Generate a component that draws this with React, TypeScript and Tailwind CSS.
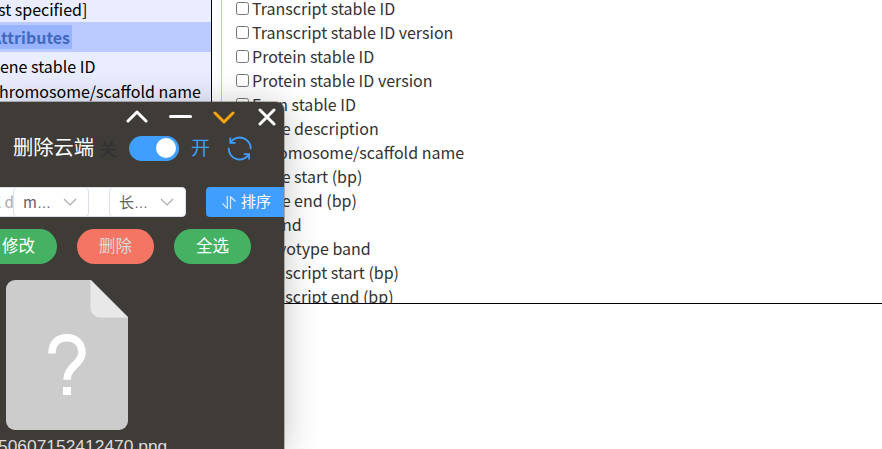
import React from "react";

const attributes = [
  "Transcript stable ID",
  "Transcript stable ID version",
  "Protein stable ID",
  "Protein stable ID version",
  "Exon stable ID",
  "Gene description",
  "Chromosome/scaffold name",
  "Gene start (bp)",
  "Gene end (bp)",
  "Strand",
  "Karyotype band",
  "Transcript start (bp)",
  "Transcript end (bp)",
];

function Sidebar() {
  return (
    <aside className="flex h-full w-[212px] shrink-0 flex-col overflow-hidden whitespace-nowrap border-r border-black bg-[#eaedff] text-[16px] leading-6 text-black">
      <div className="flex h-[22px] items-end pb-px">
        <span className="-ml-[2px] leading-6">st specified]</span>
      </div>
      <div className="flex h-[30px] items-center bg-[#bacbff]">
        <span className="-ml-[9px] bg-[#9ab3ff] pr-0.5 font-bold leading-6 text-[#4169bd]">Attributes</span>
      </div>
      <div className="mt-[2px]">ene stable ID</div>
      <div className="mt-px -ml-[1px]">hromosome/scaffold name</div>
    </aside>
  );
}

function AttributeList() {
  return (
    <section className="ml-[9px] flex-1 overflow-hidden border-l border-[#b9c8fa] pl-3.5">
      <ul className="-mt-1">
        {attributes.map((name) => (
          <li key={name} className="flex h-6 items-center whitespace-nowrap text-[16px] leading-6 text-[#333]">
            <span className="mr-[3px] size-[13px] shrink-0 rounded-[2.5px] border border-[#767676] bg-white" />
            {name}
          </li>
        ))}
      </ul>
    </section>
  );
}

function Chevron({ className }: { className: string }) {
  return (
    <svg className={className} viewBox="0 0 22 13" fill="none" stroke="currentColor" strokeWidth="3" strokeLinecap="round" strokeLinejoin="round">
      <path d="M2 11 11 2l9 9" />
    </svg>
  );
}

function Select({ label, wide = false }: { label: string; wide?: boolean }) {
  return (
    <div className={`flex h-[30px] shrink-0 items-center justify-between rounded border border-[#dcdfe6] bg-white pr-[11px] pl-[9px] text-[15px] text-[#606266] ${wide ? "w-[77px]" : "w-[76px]"}`}>
      <span>
        {label}
        <span className="font-['Liberation_Sans',sans-serif] text-[14px]">…</span>
      </span>
      <svg className="h-[9px] w-[14px] text-[#a8abb2]" viewBox="0 0 14 9" fill="none" stroke="currentColor" strokeWidth="1.2">
        <path d="m1 1 6 6 6-6" />
      </svg>
    </div>
  );
}

function FileWindow() {
  return (
    <div className="absolute top-[102px] left-0 h-[347px] w-[284px] overflow-hidden rounded-tr-lg bg-[#3f3b36] shadow-[0_0_0_1px_rgba(90,90,90,.4),0_4px_36px_rgba(0,0,0,.24)]">
      <div className="flex h-[29px] items-center pl-[126px] text-white">
        <Chevron className="-mt-px h-[13px] w-[22px]" />
        <span className="ml-[21px] h-[3px] w-[23px] rounded-full bg-white" />
        <Chevron className="mt-[2px] ml-[21px] h-[13px] w-[22px] rotate-180 text-[#ffa30f]" />
        <svg className="ml-[23px] size-[18px]" viewBox="0 0 18 18" stroke="currentColor" strokeWidth="3" strokeLinecap="round">
          <path d="m2 2 14 14M16 2 2 16" />
        </svg>
      </div>

      <div className="flex h-[34px] items-center whitespace-nowrap pl-[13px] text-[20px] leading-8">
        <span className="-mt-[4px] w-[81px] text-[20.3px] text-white">删除云端</span>
        <span className="-mt-px ml-[5px] w-[18px] text-[18px] text-[#303133]">关</span>
        <span className="ml-3 flex h-[25px] w-[50px] items-center justify-end rounded-full bg-[#409eff] pr-[3px]">
          <span className="size-5 rounded-full bg-white" />
        </span>
        <span className="-mt-[3px] ml-3 w-[20px] text-[19px] text-[#409eff]">开</span>
        <svg className="ml-[16px] size-[25px] text-[#409eff]" viewBox="0 0 25 25" fill="none" stroke="currentColor" strokeWidth="1.8">
          <path d="M3.5 6.5A11 11 0 0 1 23.7 13.2M1.7 11.8A11 11 0 0 0 21.9 18.5" />
          <path d="M3.3 1.5v5.3h5.3M22.1 23.5v-5.3h-5.3" />
        </svg>
      </div>

      <div className="mt-[22px] flex h-[30px]">
        <div className="flex w-[113px] shrink-0 border-y border-[#dcdfe6] bg-white">
          <div className="h-7 w-[13px] overflow-hidden whitespace-nowrap text-[15px] leading-7 text-[#a8abb2]">
            <span className="-ml-[3px]">l d</span>
          </div>
          <div className="-my-px">
            <Select label="m" />
          </div>
        </div>
        <div className="-ml-1">
          <Select label="长" wide />
        </div>
        <button className="ml-5 flex h-[30px] w-[90px] shrink-0 items-center rounded bg-[#409eff] pl-4 text-[15px] text-white">
          <svg className="mr-[5px] h-[13px] w-[14px] opacity-80" viewBox="0 0 14 13" fill="none" stroke="currentColor" strokeWidth="1.2">
            <path d="M.5 7.5 5.3 12.3V0M13.5 5.5 8.5.7V13" />
          </svg>
          <span className="-mt-0.5">排序</span>
        </button>
      </div>

      <div className="mt-3 -ml-5 flex gap-5 text-[16.5px] text-white">
        <button className="h-[35px] w-[77px] rounded-full bg-[#45b163] pb-0.5">修改</button>
        <button className="h-[35px] w-[77px] rounded-full bg-[#f47564] pb-0.5 text-[#d9d9d9]">删除</button>
        <button className="h-[35px] w-[77px] rounded-full bg-[#45b163] pb-0.5">全选</button>
      </div>

      <div className="mt-4 ml-1.5 w-[122px]">
        <svg className="h-[150px] w-[122px]" viewBox="0 0 122 150">
          <path fill="#ccc" d="M9 0h76l37 37v104a9 9 0 0 1-9 9H9a9 9 0 0 1-9-9V9a9 9 0 0 1 9-9Z" />
          <path fill="#e8e8e8" d="m84.5 0 37.5 37.5H94a9.5 9.5 0 0 1-9.5-9.5Z" />
          <path fill="none" stroke="#fff" strokeWidth="7.5" d="M46 73.5C46 63 52 57.7 61 57.7s15 6 15 15c0 11-15 14-15 27" />
          <path fill="#fff" d="M57 107h8v8h-8z" />
        </svg>
      </div>
      <div className="mt-[6px] -ml-[2px] whitespace-nowrap font-['Liberation_Sans',sans-serif] text-[17.4px] leading-5 text-[#ddd]">50607152412470.png</div>
    </div>
  );
}

export default function App() {
  return (
    <main className="relative h-[449px] w-[882px] overflow-hidden bg-white font-['Noto_Sans_CJK_SC',sans-serif]">
      <div className="flex h-[304px] border-b border-black">
        <Sidebar />
        <AttributeList />
      </div>
      <FileWindow />
    </main>
  );
}
